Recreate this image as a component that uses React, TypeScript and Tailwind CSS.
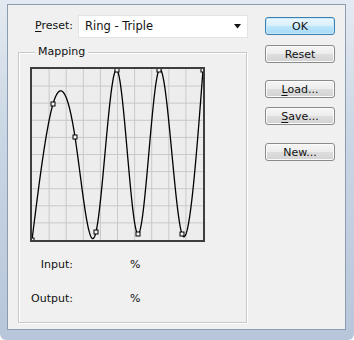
import React from "react";

const PTS: [number, number][] = [
  [0, 171],
  [21, 35],
  [43, 68],
  [64, 163],
  [85, 1],
  [106, 165],
  [127, 1],
  [150, 165],
  [171, 1],
];

function splinePath(): string {
  const n = PTS.length;
  const xs = PTS.map((p) => p[0]);
  const ys = PTS.map((p) => p[1]);
  const h: number[] = [];
  for (let i = 0; i < n - 1; i++) h.push(xs[i + 1] - xs[i]);
  const M = new Array(n).fill(0);
  // tridiagonal for M1..M(n-2)
  const m = n - 2;
  const a = new Array(m).fill(0);
  const b = new Array(m).fill(0);
  const c = new Array(m).fill(0);
  const d = new Array(m).fill(0);
  for (let k = 0; k < m; k++) {
    const i = k + 1;
    a[k] = h[i - 1];
    b[k] = 2 * (h[i - 1] + h[i]);
    c[k] = h[i];
    d[k] = 6 * ((ys[i + 1] - ys[i]) / h[i] - (ys[i] - ys[i - 1]) / h[i - 1]);
  }
  for (let k = 1; k < m; k++) {
    const w = a[k] / b[k - 1];
    b[k] -= w * c[k - 1];
    d[k] -= w * d[k - 1];
  }
  const sol = new Array(m).fill(0);
  sol[m - 1] = d[m - 1] / b[m - 1];
  for (let k = m - 2; k >= 0; k--) sol[k] = (d[k] - c[k] * sol[k + 1]) / b[k];
  for (let k = 0; k < m; k++) M[k + 1] = sol[k];

  const out: string[] = [];
  for (let x = 0; x <= 171; x += 0.5) {
    let i = 0;
    while (i < n - 2 && x > xs[i + 1]) i++;
    const hi = h[i];
    const A = (xs[i + 1] - x) / hi;
    const B = (x - xs[i]) / hi;
    let y =
      A * ys[i] +
      B * ys[i + 1] +
      ((A * A * A - A) * M[i] + (B * B * B - B) * M[i + 1]) * (hi * hi) / 6;
    y = Math.max(0.5, Math.min(170.5, y));
    out.push(`${out.length ? "L" : "M"}${x.toFixed(2)} ${y.toFixed(2)}`);
  }
  return out.join(" ");
}

function Btn({ children, def }: { children: React.ReactNode; def?: boolean }) {
  return (
    <div
      className={
        "w-[70px] h-[18px] rounded-[3px] border flex items-center justify-center text-[11px] leading-none text-[#111] " +
        (def
          ? "border-[#3c7fb1] bg-[linear-gradient(#eaf6fd_0%,#d9f0fc_50%,#bee6fd_51%,#a7d9f5_100%)] shadow-[inset_0_0_0_1px_#c8e8f9]"
          : "border-[#8a8a8a] bg-[linear-gradient(#f6f6f6_0%,#ececec_50%,#dedede_51%,#d2d2d2_100%)] shadow-[inset_0_0_0_1px_#fbfbfb]")
      }
    >
      {children}
    </div>
  );
}

export default function App() {
  const grid = [1, 2, 3, 4, 5, 6, 7, 8, 9].map((k) => k * 17.1);
  return (
    <div
      className="w-[354px] h-[340px] pt-[4px] pl-[7px] pr-[8px] pb-[10px] bg-[linear-gradient(180deg,#e4eaf1_0%,#c9d6e4_40%,#b8c6db_100%)] rounded-b-[6px]"
      style={{ fontFamily: '"DejaVu Sans", Tahoma, sans-serif' }}
    >
      <div className="w-full h-full border border-[#8c9cb0] bg-[#f0f0f0] flex text-[11px] text-[#111]">
        {/* left column */}
        <div className="flex flex-col w-[230px] ml-[10px]">
          <div className="flex items-center h-[23px] mt-[10px]">
            <span className="ml-[17px]">
              <span className="underline underline-offset-2">P</span>reset:
            </span>
            <div className="ml-auto w-[170px] h-[23px] bg-white border border-[#e2e3e6] flex items-center pl-[6px] pr-[5px] text-[11.5px]">
              <span className="flex-1">Ring - Triple</span>
              <svg width="8" height="5" viewBox="0 0 8 5">
                <polygon points="0,0 7,0 3.5,4.5" fill="#111" />
              </svg>
            </div>
          </div>

          <div className="relative mt-[14px] w-[229px] h-[271px] border border-[#c5c9cd] shadow-[inset_1px_1px_0_#ffffff,1px_1px_0_#ffffff] flex flex-col">
            <span className="absolute left-[16px] -top-[8px] bg-[#f0f0f0] px-[3px] leading-[14px]">
              Mapping
            </span>
            <div className="ml-[11px] mt-[14px] w-[175px] h-[175px] border-2 border-[#3e3e3e] bg-[#ededed]">
              <svg width="171" height="171" viewBox="0 0 171 171" className="block">
                {grid.map((g) => (
                  <line key={"v" + g} x1={g} y1={0} x2={g} y2={171} stroke="#c9c9c9" strokeWidth="1" />
                ))}
                {grid.map((g) => (
                  <line key={"h" + g} x1={0} y1={g} x2={171} y2={g} stroke="#c9c9c9" strokeWidth="1" />
                ))}
                <path d={splinePath()} fill="none" stroke="#000" strokeWidth="1.3" />
                {PTS.map(([x, y], i) => (
                  <rect
                    key={i}
                    x={x - 2}
                    y={y - 2}
                    width={4}
                    height={4}
                    fill="#f4f4f4"
                    stroke="#000"
                    strokeWidth="1"
                  />
                ))}
              </svg>
            </div>
            <div className="flex items-center h-[20px] mt-[13px]">
              <span className="w-[54px] text-right">Input:</span>
              <span className="ml-[57px]">%</span>
            </div>
            <div className="flex items-center h-[20px] mt-[14px]">
              <span className="w-[54px] text-right">Output:</span>
              <span className="ml-[57px]">%</span>
            </div>
          </div>
        </div>

        {/* right column */}
        <div className="flex flex-col ml-[17px] mt-[12px]">
          <Btn def>OK</Btn>
          <div className="mt-[10px]">
            <Btn>Reset</Btn>
          </div>
          <div className="mt-[17px]">
            <Btn>
              <span className="underline underline-offset-2">L</span>oad...
            </Btn>
          </div>
          <div className="mt-[9px]">
            <Btn>
              <span className="underline underline-offset-2">S</span>ave...
            </Btn>
          </div>
          <div className="mt-[18px]">
            <Btn>New...</Btn>
          </div>
        </div>
      </div>
    </div>
  );
}
